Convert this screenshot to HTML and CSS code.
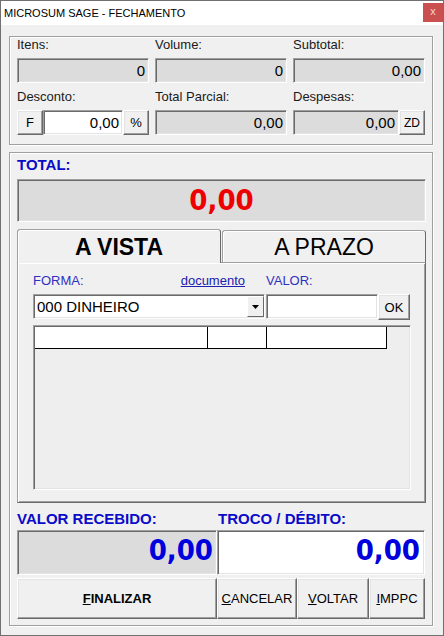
FILE: index.html
```html
<!DOCTYPE html>
<html lang="pt-BR">
<head>
    <meta charset="UTF-8">
    <title>MICROSUM SAGE - FECHAMENTO</title>
    <link rel="stylesheet" href="styles.css">
</head>
<body>

<div class="janela">
    <div class="barra-titulo">
        <span class="titulo-janela">MICROSUM SAGE - FECHAMENTO</span>
        <span class="fechar">x</span>
    </div>

    <div class="conteudo">
        <!-- resumo da venda -->
        <div class="grupo resumo">
            <div class="celula">
                <div class="lbl">Itens:</div>
                <div class="campo">0</div>
            </div>
            <div class="celula">
                <div class="lbl">Volume:</div>
                <div class="campo">0</div>
            </div>
            <div class="celula">
                <div class="lbl">Subtotal:</div>
                <div class="campo">0,00</div>
            </div>
            <div class="celula">
                <div class="lbl">Desconto:</div>
                <div class="par">
                    <button class="btn quad">F</button>
                    <div class="campo editavel">0,00</div>
                    <button class="btn quad">%</button>
                </div>
            </div>
            <div class="celula">
                <div class="lbl">Total Parcial:</div>
                <div class="campo">0,00</div>
            </div>
            <div class="celula">
                <div class="lbl">Despesas:</div>
                <div class="par">
                    <div class="campo">0,00</div>
                    <button class="btn quad pequeno">ZD</button>
                </div>
            </div>
        </div>

        <!-- pagamento -->
        <div class="grupo pagamento">
            <div class="rotulo-azul">TOTAL:</div>
            <div class="total"><span class="grande vermelho">0,00</span></div>

            <div class="abas">
                <div class="aba ativa">A VISTA</div>
                <div class="aba">A PRAZO</div>
            </div>
            <div class="painel">
                <div class="linha-lbl">
                    <div class="lbl-forma">
                        <span>FORMA:</span>
                        <a href="#" class="link">documento</a>
                    </div>
                    <span class="lbl-valor">VALOR:</span>
                </div>
                <div class="linha">
                    <div class="combo">
                        <span class="combo-texto">000 DINHEIRO</span>
                        <span class="seta">
                            <svg width="7" height="4" viewBox="0 0 7 4"><polygon points="0,0 7,0 3.5,4" fill="#000"/></svg>
                        </span>
                    </div>
                    <div class="entrada"></div>
                    <button class="btn ok">OK</button>
                </div>
                <div class="grade">
                    <div class="cabecalho">
                        <div class="col c1"></div>
                        <div class="col c2"></div>
                        <div class="col c3"></div>
                    </div>
                </div>
            </div>

            <div class="rotulos">
                <div class="rotulo-azul">VALOR RECEBIDO:</div>
                <div class="rotulo-azul">TROCO / DÉBITO:</div>
            </div>
            <div class="valores">
                <div class="valor"><span class="grande azul">0,00</span></div>
                <div class="valor branco"><span class="grande azul">0,00</span></div>
            </div>

            <div class="botoes">
                <button class="btn grande-btn negrito"><u>F</u>INALIZAR</button>
                <button class="btn grande-btn"><u>C</u>ANCELAR</button>
                <button class="btn grande-btn"><u>V</u>OLTAR</button>
                <button class="btn grande-btn"><u>I</u>MPPC</button>
            </div>
        </div>
    </div>
</div>

</body>
</html>
```

FILE: styles.css
```css
* {
    box-sizing: border-box;
}
body {
    margin: 0;
    background: #f0f0f0;
    font-family: "Liberation Sans", Arial, sans-serif;
    color: #111;
}
.janela {
    width: 444px;
    height: 636px;
    border: 1px solid #707070;
    background: #f0f0f0;
}
.barra-titulo {
    height: 24px;
    background: #fff;
    display: flex;
    justify-content: space-between;
    padding-left: 3px;
}
.titulo-janela {
    font-size: 11px;
    line-height: 24px;
    color: #000;
}
.fechar {
    width: 20px;
    height: 19px;
    margin-top: 2px;
    background: #c9504f;
    color: #f7d2d2;
    font-size: 11px;
    line-height: 17px;
    text-align: center;
}
.conteudo {
    padding: 11px 10px 0 8px;
}

/* caixa de grupo com borda entalhada */
.grupo {
    border: 1px solid #a0a0a0;
    box-shadow: inset 1px 1px 0 #fff, 1px 1px 0 #fff;
}
.resumo {
    display: grid;
    grid-template-columns: repeat(3, 132px);
    column-gap: 6px;
    row-gap: 7px;
    padding: 1px 7px 9px 7px;
}
.lbl {
    font-size: 13px;
    line-height: 14px;
    height: 14px;
    margin-bottom: 6px;
    white-space: nowrap;
    color: #1a1a1a;
}
.campo {
    height: 25px;
    background: #dcdcdc;
    border: 1px solid;
    border-color: #a0a0a0 #fff #fff #a0a0a0;
    box-shadow: inset 1px 1px 0 #696969, inset -1px -1px 0 #e3e3e3;
    font-size: 15px;
    line-height: 23px;
    text-align: right;
    padding-right: 3px;
    color: #000;
}
.par {
    display: flex;
}
.par .campo {
    flex: 1;
}
.editavel {
    background: #fff;
}
.btn {
    font-family: inherit;
    padding: 0;
    margin: 0;
    background: #f0f0f0;
    border: 1px solid;
    border-color: #fff #696969 #696969 #fff;
    box-shadow: inset -1px -1px 0 #a0a0a0, inset 1px 1px 0 #e3e3e3;
    color: #000;
}
.quad {
    width: 26px;
    height: 25px;
    font-size: 13px;
}
.quad.pequeno {
    font-size: 12px;
}

.pagamento {
    margin-top: 7px;
    height: 474px;
    padding: 3px 6px 0 7px;
}
.rotulo-azul {
    font-size: 15px;
    font-weight: bold;
    line-height: 17px;
    color: #0a0ac8;
    white-space: nowrap;
}
.pagamento > .rotulo-azul {
    margin-bottom: 6px;
}
.total {
    height: 43px;
    background: #dcdcdc;
    border: 1px solid;
    border-color: #a0a0a0 #fff #fff #a0a0a0;
    box-shadow: inset 1px 1px 0 #696969, inset -1px -1px 0 #e3e3e3;
    text-align: center;
    line-height: 41px;
}
.grande {
    font-family: "DejaVu Sans Condensed", "DejaVu Sans", sans-serif;
    font-stretch: condensed;
    font-weight: bold;
    font-size: 29px;
}
.vermelho {
    color: #ee0000;
}
.azul {
    color: #0000dd;
}

/* abas */
.abas {
    display: flex;
    margin-top: 7px;
    height: 33px;
}
.aba {
    position: relative;
    width: 204px;
    height: 32px;
    align-self: flex-end;
    margin-left: 1px;
    font-size: 23px;
    line-height: 30px;
    padding-top: 1px;
    text-align: center;
    color: #000;
    background: #f0f0f0;
    border: 1px solid;
    border-bottom: none;
    border-color: #a0a0a0 #696969 transparent #a0a0a0;
    border-radius: 3px 3px 0 0;
    box-shadow: inset 1px 1px 0 #fff;
}
.aba.ativa {
    margin-left: 0;
    height: 34px;
    margin-bottom: -1px;
    padding-top: 2px;
    font-weight: bold;
    z-index: 1;
}
.painel {
    height: 241px;
    border: 1px solid;
    border-color: #a0a0a0 #696969 #696969 #a0a0a0;
    box-shadow: inset 1px 1px 0 #fff, inset -1px -1px 0 #a0a0a0;
    padding: 11px 14px 0 15px;
}
.linha-lbl {
    display: flex;
    height: 14px;
    margin-bottom: 6px;
    font-size: 13px;
    line-height: 14px;
    color: #3030c0;
}
.lbl-forma {
    width: 232px;
    display: flex;
    justify-content: space-between;
    padding-right: 20px;
}
.link {
    color: #2020b0;
    text-decoration: underline;
}
.lbl-valor {
    margin-left: 1px;
}
.linha {
    display: flex;
    height: 26px;
}
.combo {
    width: 232px;
    height: 25px;
    display: flex;
    background: #fff;
    border: 1px solid;
    border-color: #a0a0a0 #fff #fff #a0a0a0;
    box-shadow: inset 1px 1px 0 #696969, inset -1px -1px 0 #e3e3e3;
    padding: 1px 0 1px 3px;
}
.combo-texto {
    flex: 1;
    font-size: 15px;
    line-height: 21px;
    color: #000;
}
.seta {
    width: 17px;
    display: flex;
    align-items: center;
    justify-content: center;
    background: #f0f0f0;
    border: 1px solid;
    border-color: #fff #696969 #696969 #fff;
}
.entrada {
    width: 112px;
    height: 25px;
    margin-left: 1px;
    background: #fff;
    border: 1px solid;
    border-color: #a0a0a0 #fff #fff #a0a0a0;
    box-shadow: inset 1px 1px 0 #696969, inset -1px -1px 0 #e3e3e3;
}
.ok {
    width: 32px;
    height: 26px;
    font-size: 13px;
}
.grade {
    margin-top: 5px;
    height: 165px;
    background: #eeeeee;
    border: 1px solid;
    border-color: #a0a0a0 #fff #fff #a0a0a0;
    box-shadow: inset 1px 1px 0 #696969, inset -1px -1px 0 #e3e3e3;
    padding: 1px 0 0 1px;
}
.cabecalho {
    display: flex;
    height: 22px;
}
.col {
    background: #fff;
    border-right: 1px solid #000;
    border-bottom: 1px solid #000;
}
.c1 { width: 173px; }
.c2 { width: 59px; }
.c3 { width: 120px; }

/* valores e botoes */
.rotulos {
    display: grid;
    grid-template-columns: 201px 207px;
    margin-top: 7px;
    margin-bottom: 3px;
}
.valores {
    display: grid;
    grid-template-columns: 200px 208px;
    height: 44px;
}
.valor {
    background: #dcdcdc;
    border: 1px solid;
    border-color: #a0a0a0 #fff #fff #a0a0a0;
    box-shadow: inset 1px 1px 0 #696969, inset -1px -1px 0 #e3e3e3;
    text-align: right;
    padding-right: 3px;
    line-height: 38px;
}
.valor.branco {
    background: #fff;
    padding-right: 4px;
}
.botoes {
    display: grid;
    grid-template-columns: 200px 80px 72px 56px;
    margin-top: 4px;
    height: 41px;
}
.grande-btn {
    height: 41px;
    font-size: 13px;
}
.negrito {
    font-weight: bold;
}
```
